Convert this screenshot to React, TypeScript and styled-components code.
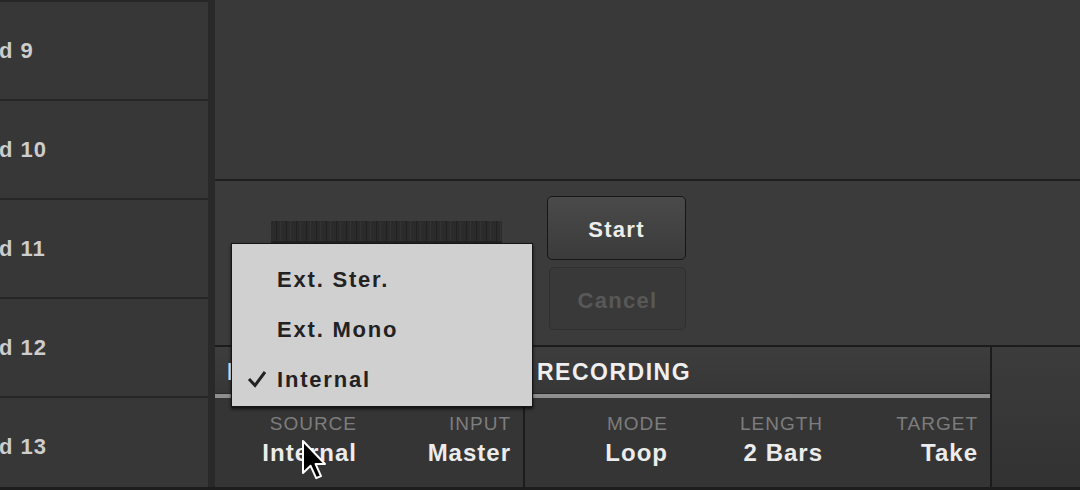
import React from 'react';
import styled, { createGlobalStyle } from 'styled-components';

const GlobalStyle = createGlobalStyle`
	html, body {
		margin: 0;
		padding: 0;
		background: #1d1d1d;
	}
	body {
		font-family: 'Liberation Sans', Arial, sans-serif;
		-webkit-font-smoothing: antialiased;
	}
`;

const Screen = styled.div`
	position: relative;
	width: 1080px;
	height: 490px;
	overflow: hidden;
	display: flex;
	flex-direction: column;
	background: #1d1d1d;
`;

const Main = styled.div`
	display: flex;
	height: 487px;
	flex: none;
	background: linear-gradient(90deg, #2a2a2a, #242424);
`;

const PadColumn = styled.div`
	width: 208px;
	flex: none;
	display: flex;
	flex-direction: column;
	gap: 2px;
	padding-top: 2px;
	overflow: hidden;
	background: #262626;
`;

const PadRow = styled.div`
	flex: none;
	height: 97px;
	display: flex;
	align-items: center;
	background: #373737;
`;

const PadLabel = styled.span`
	margin-left: -30px;
	color: #cdcdcd;
	font-size: 22px;
	font-weight: bold;
	letter-spacing: 1px;
	white-space: nowrap;
`;

const Panel = styled.div`
	flex: 1;
	margin-left: 7px;
	display: flex;
	flex-direction: column;
	min-width: 0;
`;

const TopArea = styled.div`
	height: 179px;
	flex: none;
	background: #393939;
	border-bottom: 2px solid #1f1f1f;
`;

const Middle = styled.div`
	position: relative;
	height: 149px;
	flex: none;
	display: flex;
	align-items: flex-start;
	padding: 15px 0 0 56px;
	background: #3b3b3b;
`;

const Meter = styled.div`
	width: 231px;
	height: 22px;
	margin-top: 25px;
	background:
		repeating-linear-gradient(90deg, transparent 0 5px, rgba(0, 0, 0, 0.25) 5px 6px, transparent 6px 9px, rgba(255, 255, 255, 0.04) 9px 10px),
		#2b2b2b;
	box-shadow: inset 0 -2px 0 #222;
`;

const ButtonStack = styled.div`
	margin-left: 45px;
	display: flex;
	flex-direction: column;
	align-items: flex-end;
	gap: 7px;
`;

const Button = styled.div<{ disabled?: boolean }>`
	box-sizing: border-box;
	width: ${p => (p.disabled ? 137 : 139)}px;
	height: ${p => (p.disabled ? 63 : 64)}px;
	display: flex;
	align-items: center;
	justify-content: center;
	padding-top: 4px;
	border-radius: 5px;
	border: 1px solid ${p => (p.disabled ? '#2f2f2f' : '#161616')};
	background: ${p => (p.disabled ? '#393939' : 'linear-gradient(#4a4a4a, #3b3b3b)')};
	color: ${p => (p.disabled ? '#585858' : '#ededed')};
	font-size: 22px;
	font-weight: bold;
	letter-spacing: 1.3px;
`;

const Menu = styled.div`
	position: absolute;
	left: 16px;
	top: 62px;
	box-sizing: border-box;
	width: 302px;
	height: 164px;
	padding-top: 10px;
	background: #d0d0d0;
	border: 1px solid #151515;
	box-shadow: 0 2px 3px rgba(0, 0, 0, 0.7);
	z-index: 2;
`;

const MenuItem = styled.div`
	position: relative;
	height: 49px;
	display: flex;
	align-items: center;
	padding: 1px 0 0 45px;
	color: #222;
	font-size: 22px;
	font-weight: bold;
	letter-spacing: 1.8px;
`;

const Check = styled.svg`
	position: absolute;
	left: 15px;
	top: 16px;
`;

const BottomBar = styled.div`
	flex: 1;
	display: flex;
	border-top: 2px solid #1c1c1c;
`;

const Section = styled.div<{ width: number }>`
	width: ${p => p.width}px;
	flex: none;
	display: flex;
	flex-direction: column;
	border-right: 2px solid #1c1c1c;
`;

const SectionHeader = styled.div`
	height: 46px;
	box-sizing: border-box;
	flex: none;
	display: flex;
	align-items: center;
	padding: 5px 0 0 12px;
	background: linear-gradient(#3d3d3d, #373737);
	color: #efefef;
	font-size: 23px;
	font-weight: bold;
	letter-spacing: 1.5px;
`;

const Underline = styled.div`
	height: 4px;
	flex: none;
	margin-top: 1px;
	background: #8e8e8e;
`;

const Params = styled.div`
	flex: 1;
	display: flex;
	background: #353535;
`;

const Param = styled.div`
	width: 155px;
	box-sizing: border-box;
	display: flex;
	flex-direction: column;
	align-items: flex-end;
	padding: 16px 12px 0 0;
`;

const ParamLabel = styled.div`
	color: #7d7d7d;
	font-size: 19px;
	line-height: 20px;
	letter-spacing: 1px;
`;

const ParamValue = styled.div`
	margin-top: 6px;
	color: #ececec;
	font-size: 24px;
	line-height: 26px;
	font-weight: bold;
	letter-spacing: 1px;
`;

const SidePanel = styled.div`
	flex: 1;
	background: linear-gradient(#3c3c3c, #323232);
`;

const BottomEdge = styled.div`
	flex: 1;
	background: #1d1d1d;
`;

const Cursor = styled.svg`
	position: absolute;
	left: 301px;
	top: 439px;
	z-index: 3;
`;

const pads = [9, 10, 11, 12, 13];

const sources = [
	{ label: 'SOURCE', value: 'Internal' },
	{ label: 'INPUT', value: 'Master' },
];

const recording = [
	{ label: 'MODE', value: 'Loop' },
	{ label: 'LENGTH', value: '2 Bars' },
	{ label: 'TARGET', value: 'Take' },
];

const menuItems = ['Ext. Ster.', 'Ext. Mono', 'Internal'];

export default function App() {
	return (
		<>
			<GlobalStyle />
			<Screen>
				<Main>
					<PadColumn>
						{pads.map(n => (
							<PadRow key={n}>
								<PadLabel>Pad {n}</PadLabel>
							</PadRow>
						))}
					</PadColumn>
					<Panel>
						<TopArea />
						<Middle>
							<Meter />
							<ButtonStack>
								<Button>Start</Button>
								<Button disabled>Cancel</Button>
							</ButtonStack>
							<Menu>
								{menuItems.map(item => (
									<MenuItem key={item}>
										{item === 'Internal' && (
											<Check width="20" height="18" viewBox="0 0 20 18">
												<polyline
													points="2,9 8,15.5 18,2"
													fill="none"
													stroke="#222"
													strokeWidth="3"
												/>
											</Check>
										)}
										{item}
									</MenuItem>
								))}
							</Menu>
						</Middle>
						<BottomBar>
							<Section width={308}>
								<SectionHeader>INPUT</SectionHeader>
								<Underline />
								<Params>
									{sources.map(p => (
										<Param key={p.label}>
											<ParamLabel>{p.label}</ParamLabel>
											<ParamValue>{p.value}</ParamValue>
										</Param>
									))}
								</Params>
							</Section>
							<Section width={465}>
								<SectionHeader>RECORDING</SectionHeader>
								<Underline />
								<Params>
									{recording.map(p => (
										<Param key={p.label}>
											<ParamLabel>{p.label}</ParamLabel>
											<ParamValue>{p.value}</ParamValue>
										</Param>
									))}
								</Params>
							</Section>
							<SidePanel />
						</BottomBar>
					</Panel>
				</Main>
				<BottomEdge />
				<Cursor width="26" height="42" viewBox="0 0 13 21">
					<path
						d="M1 1 L1 17 L4.8 13.4 L7.6 19.6 L10 18.6 L7.3 12.5 L12 12.5 Z"
						fill="#000"
						stroke="#fff"
						strokeWidth="1"
						strokeLinejoin="round"
					/>
				</Cursor>
			</Screen>
		</>
	);
}
